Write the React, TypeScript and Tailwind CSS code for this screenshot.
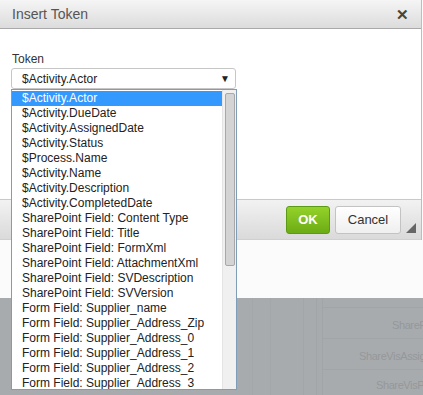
import React from 'react';

const items = [
  '$Activity.Actor',
  '$Activity.DueDate',
  '$Activity.AssignedDate',
  '$Activity.Status',
  '$Process.Name',
  '$Activity.Name',
  '$Activity.Description',
  '$Activity.CompletedDate',
  'SharePoint Field: Content Type',
  'SharePoint Field: Title',
  'SharePoint Field: FormXml',
  'SharePoint Field: AttachmentXml',
  'SharePoint Field: SVDescription',
  'SharePoint Field: SVVersion',
  'Form Field: Supplier_name',
  'Form Field: Supplier_Address_Zip',
  'Form Field: Supplier_Address_0',
  'Form Field: Supplier_Address_1',
  'Form Field: Supplier_Address_2',
  'Form Field: Supplier_Address_3',
];

function TokenList() {
  return (
    <div className="absolute left-[11px] top-[89px] w-[226px] h-[301px] border border-[#7f9db9] bg-white flex overflow-hidden">
      <ul className="flex-1 pt-px">
        {items.map((t, i) => (
          <li
            key={t}
            className={`h-[15px] leading-[15px] pl-[10px] whitespace-nowrap text-[12px] ${
              i === 0 ? 'bg-[#3399ff] text-white' : 'text-[#222]'
            }`}
          >
            {t}
          </li>
        ))}
      </ul>
      <div className="w-[14px] bg-[#f0f0f0] border-l border-[#e4e4e4] pt-[3px] px-[1px]">
        <div className="h-[173px] w-[10px] mx-auto rounded-[2px] border border-[#a8a8a8] bg-[#d4d4d4]" />
      </div>
    </div>
  );
}

export default function App() {
  return (
    <div
      className="relative w-[423px] h-[395px] overflow-hidden bg-[#fbfbfb]"
      style={{ fontFamily: '"Liberation Sans", Arial, sans-serif' }}
    >
      {/* dialog */}
      <div className="w-[422px] h-[240px] border-r border-[#bdbdbd] bg-white flex flex-col">
        <div className="h-[29px] flex items-center justify-between pl-[12px] pr-[12px] border-b border-[#a9a9a9] bg-gradient-to-b from-[#f5f5f5] to-[#dcdcdc]">
          <span className="text-[14px] text-[#555]">Insert Token</span>
          <span className="text-[15px] font-bold text-[#444] leading-none">✕</span>
        </div>
        <div className="flex-1 px-[11px] pt-[23px]">
          <div className="text-[12px] text-[#333] pl-px leading-[14px]">Token</div>
          <div className="mt-[2px] h-[21px] w-[225px] rounded-[3px] border border-[#c6c6c6] flex items-center justify-between pl-[10px] pr-[5px] text-[12px] text-[#222]">
            <span>$Activity.Actor</span>
            <span className="text-[10px] text-[#222]">▼</span>
          </div>
        </div>
        <div className="h-[41px] border-t border-[#c9c9c9] border-b border-b-[#d0d0d0] bg-gradient-to-b from-[#f2f2f2] to-[#dadada] flex items-center justify-end gap-[5px] pr-[5px]">
          <button className="h-[28px] w-[44px] rounded-[3px] border border-[#5d9a14] bg-gradient-to-b from-[#94d22a] to-[#6cac14] text-white font-bold text-[13px]">
            OK
          </button>
          <button className="h-[28px] w-[66px] rounded-[3px] border border-[#c3c3c3] bg-gradient-to-b from-white to-[#efefef] text-[#333] text-[13px]">
            Cancel
          </button>
          <div className="self-end mb-[6px] w-0 h-0 border-l-[10px] border-l-transparent border-b-[10px] border-b-[#666]" />
        </div>
      </div>

      {/* page behind, under the modal overlay */}
      <div className="h-[58px]" />
      <div className="h-[97px] bg-[#a8abad] relative">
        <div className="absolute left-[252px] top-0 bottom-0 w-px bg-[#a4a7a9]" />
        <div className="absolute left-[270px] top-0 bottom-0 w-px bg-[#a4a7a9]" />
        <div className="absolute left-[303px] top-0 bottom-0 w-px bg-[#a3a6a8]" />
        <div className="absolute left-[316px] top-0 bottom-0 w-px bg-[#a2a5a7]" />
        <div className="absolute left-[322px] top-0 bottom-0 w-px bg-[#a2a5a7]" />
        <div className="ml-[323px] flex flex-col text-[11px] tracking-[-0.4px] text-[#95989a] whitespace-nowrap">
          <div className="h-[10px] border-b border-[#a2a5a7]" />
          <div className="h-[31px] border-b border-[#a2a5a7] flex items-center pl-[69px] pt-[5px]">
            ShareP
          </div>
          <div className="h-[31px] border-b border-[#a2a5a7] flex items-center pl-[36px] pt-[5px]">
            ShareVisAssig
          </div>
          <div className="h-[24px] flex items-end pl-[53px] pb-[1px]">
            ShareVisP
          </div>
        </div>
      </div>

      <TokenList />
    </div>
  );
}
